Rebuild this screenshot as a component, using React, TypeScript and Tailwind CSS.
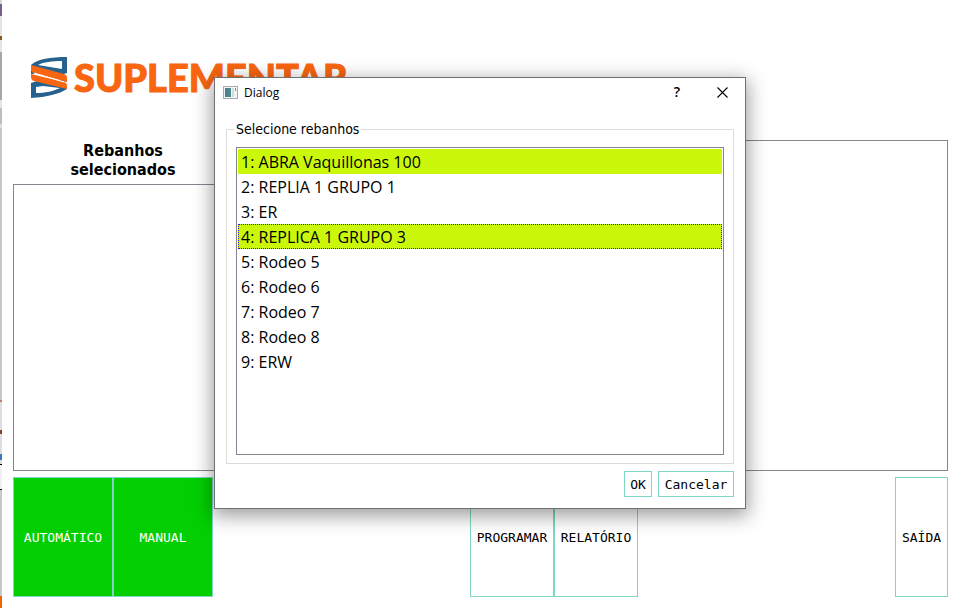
import { useState } from "react";

const HERDS = [
  "1: ABRA Vaquillonas 100",
  "2: REPLIA 1 GRUPO 1",
  "3: ER",
  "4: REPLICA 1 GRUPO 3",
  "5: Rodeo 5",
  "6: Rodeo 6",
  "7: Rodeo 7",
  "8: Rodeo 8",
  "9: ERW",
];

const MONO = "font-['DejaVu_Sans_Mono',monospace]";

function DesktopEdge() {
  return (
    <div className="flex w-0.5 shrink-0 flex-col bg-[#c8c8c8]" aria-hidden="true">
      <div className="h-1 bg-[#d8d8d8]" />
      <div className="h-3 bg-[#76608a]" />
      <div className="h-5 bg-[#e4e4e4]" />
      <div className="h-1 bg-[#8a5a20]" />
      <div className="h-3 bg-[#e4e4e4]" />
      <div className="h-12 bg-[#a8a8a8]" />
      <div className="h-2 bg-[#e4e4e4]" />
      <div className="h-4 bg-[#bdbdbd]" />
      <div className="h-1 bg-[#e0e0e0]" />
      <div className="grow" />
      <div className="h-0.5 bg-[#c07868]" />
      <div className="h-7 bg-[#dedede]" />
      <div className="h-1 bg-[#804830]" />
      <div className="h-5 bg-[#dedede]" />
      <div className="h-1.5 bg-[#3c78c0]" />
      <div className="h-1 bg-[#dedede]" />
      <div className="h-px bg-black" />
      <div className="h-6 bg-[#f0f0f0]" />
      <div className="h-px bg-black" />
      <div className="h-[106px] bg-[#c8c8c8]" />
      <div className="h-3 bg-[#f06400]" />
    </div>
  );
}

function Logo() {
  return (
    <div className="flex items-center gap-[7px]">
      <svg viewBox="0 0 36 42" className="h-[42px] w-9 shrink-0" aria-hidden="true">
        <path
          fillRule="evenodd"
          d="M0 9C6 3 20 1 36 1V17L30 19L0 11Z M7 9L31 13V5C22 5 12 6 7 9Z"
          fill="#27628f"
        />
        <path
          fillRule="evenodd"
          d="M0 27L6 25L36 31V33C28 38 16 41 0 42Z M5 31V37C14 37 23 35 29 32L12 30Z"
          fill="#27628f"
        />
        <path d="M0 14L10 17L0 18Z M36 26V23L27 24Z" fill="#27628f" />
        <path d="M0 9L33 18Q36 19 36 22V26L3 17Q0 16 0 13Z" fill="#f96510" />
        <path d="M0 18L33 26Q36 27 36 30V33L3 25Q0 24 0 21Z" fill="#f96510" />
        <path d="M3 17L33 26" stroke="#fff" strokeWidth="1" />
      </svg>
      <span className="font-['Lato',sans-serif] text-[38px] leading-10 font-black text-[#f96510] [-webkit-text-stroke:1px_#f96510]">
        SUPLEMENTAR
      </span>
    </div>
  );
}

function ActionButton({ label, className }: { label: string; className: string }) {
  return (
    <button type="button" className={`h-[120px] border border-[#7fd6c4] pt-0.5 text-[13px] ${MONO} ${className}`}>
      {label}
    </button>
  );
}

function HerdDialog() {
  const [selected, setSelected] = useState([0, 3]);
  const [current, setCurrent] = useState(3);

  const toggle = (i: number) => {
    setCurrent(i);
    setSelected((s) => (s.includes(i) ? s.filter((n) => n !== i) : [...s, i]));
  };

  return (
    <div
      role="dialog"
      aria-labelledby="dialog-title"
      className="absolute top-[77px] left-[214px] flex w-[532px] flex-col border border-[#707070] bg-white shadow-[0_5px_18px_2px_rgba(0,0,0,0.38)]"
    >
      <div className="flex h-7 items-center pr-[15px] pl-2">
        <svg viewBox="0 0 15 13" className="mr-1.5 h-[13px] w-[15px]" aria-hidden="true">
          <rect x="0.5" y="0.5" width="14" height="12" fill="#f4f4f4" stroke="#a5abb0" />
          <rect x="2" y="2" width="6" height="9" fill="#4c8a8c" />
          <rect x="2" y="2" width="3" height="9" fill="#4778a0" opacity="0.6" />
          <rect x="9" y="2" width="2" height="9" fill="#d3dbe3" />
          <rect x="12" y="2" width="1" height="3" fill="#68a575" />
        </svg>
        <h2 id="dialog-title" className="grow pt-0.5 font-['Open_Sans',sans-serif] text-xs">
          Dialog
        </h2>
        <button type="button" aria-label="Ajuda" className="mr-[30px] w-4 text-center font-['Open_Sans',sans-serif] text-sm font-semibold">
          ?
        </button>
        <button type="button" aria-label="Fechar" className="p-0.5">
          <svg viewBox="0 0 11 11" className="size-[11px]" stroke="#000" strokeWidth="1.1">
            <path d="M0.5 0.5L10.5 10.5M10.5 0.5L0.5 10.5" />
          </svg>
        </button>
      </div>
      <div className="flex flex-col px-[11px] pt-3.5 pb-[11px]">
        <fieldset className="border border-[#dcdcdc] px-[9px] pb-2">
          <legend className="-ml-0.5 px-0.5 font-['DejaVu_Sans_Condensed','DejaVu_Sans',sans-serif] text-sm leading-[18px]">
            Selecione rebanhos
          </legend>
          <div
            role="listbox"
            aria-label="Selecione rebanhos"
            aria-multiselectable="true"
            className="mt-[9px] flex h-[308px] flex-col border border-[#828790] p-px"
          >
            {HERDS.map((herd, i) => (
              <button
                key={herd}
                type="button"
                role="option"
                aria-selected={selected.includes(i)}
                onClick={() => toggle(i)}
                className={`h-[25px] border border-dotted px-0.5 pt-0.5 text-left font-['Open_Sans',sans-serif] text-base leading-[21px] ${
                  selected.includes(i) ? "bg-[#cbf80a]" : "bg-white"
                } ${current === i ? "border-[#3407f5]" : "border-transparent"}`}
              >
                {herd}
              </button>
            ))}
          </div>
        </fieldset>
        <div className={`mt-[7px] flex justify-end gap-1.5 text-[13px] ${MONO}`}>
          <button type="button" className="h-[26px] w-7 border border-[#7fd6c4] pt-0.5">
            OK
          </button>
          <button type="button" className="h-[26px] w-[76px] border border-[#7fd6c4] pt-0.5">
            Cancelar
          </button>
        </div>
      </div>
    </div>
  );
}

export default function App() {
  return (
    <div className="relative flex min-h-screen bg-white text-black">
      <DesktopEdge />
      <main className="flex grow flex-col pr-[9px] pb-[11px] pl-[11px]">
        <header className="h-[140px] pt-14 pl-[18px]">
          <Logo />
        </header>
        <div className="flex grow gap-1.5">
          <section className="flex w-[220px] flex-col">
            <h1 className="pt-px px-12 text-center font-['DejaVu_Sans_Condensed','DejaVu_Sans',sans-serif] text-base leading-[19px] font-bold">
              Rebanhos selecionados
            </h1>
            <div className="mt-[5px] grow border border-[#828790]" />
          </section>
          <section className="grow border border-[#828790]" />
        </div>
        <div className="mt-1.5 flex justify-between">
          <div className="flex">
            <ActionButton label="AUTOMÁTICO" className="w-[100px] bg-[#02cf02] text-white" />
            <ActionButton label="MANUAL" className="w-[100px] bg-[#02cf02] text-white" />
          </div>
          <div className="flex">
            <ActionButton label="PROGRAMAR" className="w-[84px]" />
            <ActionButton label="RELATÓRIO" className="w-[84px]" />
          </div>
          <ActionButton label="SAÍDA" className="w-[53px]" />
        </div>
      </main>
      <HerdDialog />
    </div>
  );
}
